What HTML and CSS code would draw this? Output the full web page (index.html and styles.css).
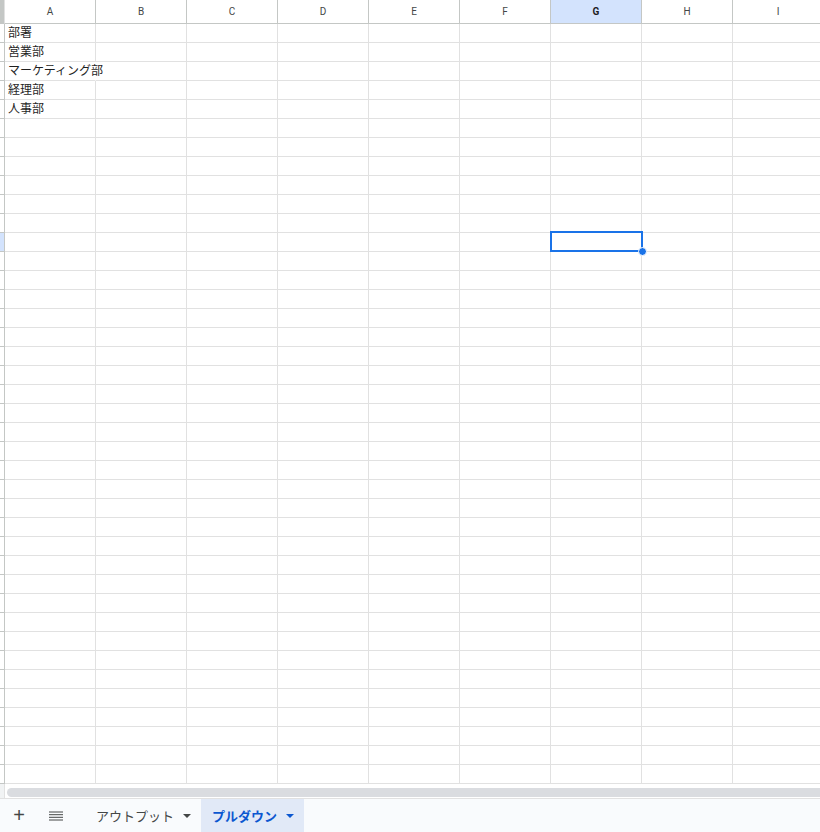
FILE: index.html
```html
<!DOCTYPE html>
<html lang="ja">
<head>
    <meta charset="UTF-8">
    <meta name="viewport" content="width=device-width, initial-scale=1.0">
    <title>プルダウン</title>
    <link rel="stylesheet" href="styles.css">
</head>
<body>
    <div class="sheet">
        <!-- Cell grid: header row + 40 data rows, built by the script below -->
        <div class="grid" id="grid">
            <div class="selection"></div>
        </div>

        <!-- Horizontal scrollbar -->
        <div class="hscroll">
            <div class="hscroll-corner"></div>
            <div class="hscroll-thumb"></div>
        </div>

        <!-- Sheet tabs -->
        <div class="tabbar">
            <button class="tool-btn add-btn">+</button>
            <button class="tool-btn list-btn">
                <svg width="14" height="10" viewBox="0 0 14 10">
                    <path d="M0 1h14M0 3.7h14M0 6.3h14M0 9h14" stroke="#444746" stroke-width="1"/>
                </svg>
            </button>
            <div class="tab">
                <span>アウトプット</span>
                <span class="caret"></span>
            </div>
            <div class="tab active">
                <span>プルダウン</span>
                <span class="caret"></span>
            </div>
        </div>
    </div>

    <script>
        const columns = ['A', 'B', 'C', 'D', 'E', 'F', 'G', 'H', 'I'];
        const values = ['部署', '営業部', 'マーケティング部', '経理部', '人事部'];
        const rowCount = 40;
        const activeCol = 6;   // G
        const activeRow = 12;

        const grid = document.getElementById('grid');

        // Column headers
        const head = document.createElement('div');
        head.className = 'row head-row';
        head.innerHTML = '<div class="row-head corner"></div>';
        columns.forEach((name, i) => {
            const cell = document.createElement('div');
            cell.className = 'col-head' + (i === activeCol ? ' current' : '');
            cell.textContent = name;
            head.appendChild(cell);
        });
        grid.appendChild(head);

        // Data rows
        for (let r = 1; r <= rowCount; r++) {
            const row = document.createElement('div');
            row.className = 'row';

            const rowHead = document.createElement('div');
            rowHead.className = 'row-head' + (r === activeRow ? ' current' : '');
            row.appendChild(rowHead);

            columns.forEach((name, i) => {
                const cell = document.createElement('div');
                cell.className = 'cell';
                if (i === 0 && values[r - 1]) {
                    cell.textContent = values[r - 1];
                    // long text runs over into column B
                    if (values[r - 1].length > 6) cell.classList.add('spill');
                }
                row.appendChild(cell);
            });
            grid.appendChild(row);
        }
    </script>
</body>
</html>
```

FILE: styles.css
```css
* {
    box-sizing: border-box;
}

body {
    margin: 0;
    font-family: 'Liberation Sans', 'Noto Sans CJK JP', Arial, sans-serif;
    background: #fff;
    color: #000;
}

.sheet {
    width: 820px;
    height: 832px;
    display: flex;
    flex-direction: column;
    overflow: hidden;
}

/* ---- grid ---- */
.grid {
    position: relative;
    height: 784px;
    overflow: hidden;
    flex: none;
}

.row {
    display: flex;
    height: 19px;
    width: max-content;
}

.head-row {
    height: 24px;
}

.row-head {
    width: 5px;
    flex: none;
    border-right: 1px solid #c4c7c5;
    border-bottom: 1px solid #c4c7c5;
    background: #fff;
}

.row-head.current {
    background: #d3e3fd;
}

.row-head.corner {
    background: #c4c7c5;
    border-right-color: #e1e1e1;
}

.col-head {
    width: 91px;
    flex: none;
    border-right: 1px solid #c4c7c5;
    border-bottom: 1px solid #c4c7c5;
    font-family: Roboto, 'Liberation Sans', sans-serif;
    font-size: 10px;
    color: #444746;
    text-align: center;
    line-height: 23px;
}

.col-head.current {
    background: #d3e3fd;
    color: #1f1f1f;
    font-weight: bold;
}

.cell {
    width: 91px;
    flex: none;
    border-right: 1px solid #e1e1e1;
    border-bottom: 1px solid #e1e1e1;
    font-size: 12px;
    line-height: 19px;
    padding: 0 3px;
    white-space: nowrap;
    color: #1f1f1f;
}

.cell.spill {
    overflow: visible;
    border-right-color: transparent;
    position: relative;
    z-index: 1;
}

/* active cell outline and fill handle */
.selection {
    position: absolute;
    left: 550px;
    top: 231px;
    width: 93px;
    height: 21px;
    border: 2px solid #1a73e8;
    z-index: 2;
}

.selection::after {
    content: '';
    position: absolute;
    right: -6px;
    bottom: -6px;
    width: 7px;
    height: 7px;
    border-radius: 50%;
    background: #1a73e8;
    border: 1px solid #fff;
}

/* ---- scrollbar ---- */
.hscroll {
    height: 15px;
    flex: none;
    display: flex;
    border-bottom: 1px solid #e1e1e1;
    background: #fff;
}

.hscroll-corner {
    width: 5px;
    background: #f1f3f4;
    border-right: 1px solid #e1e1e1;
}

.hscroll-thumb {
    flex: 1;
    margin: 4px 0 1px 2px;
    background: #dadce0;
    border-radius: 5px 0 0 5px;
}

/* ---- tabs ---- */
.tabbar {
    flex: 1;
    display: flex;
    align-items: stretch;
    background: #f9fbfd;
    font-size: 13px;
    color: #444746;
}

.tool-btn {
    border: none;
    background: none;
    padding: 0;
    display: flex;
    align-items: center;
    justify-content: center;
    color: #444746;
    font-family: inherit;
}

.add-btn {
    width: 38px;
    font-size: 20px;
    font-weight: 300;
}

.list-btn {
    width: 36px;
}

.tab {
    display: flex;
    align-items: center;
    gap: 9px;
    padding: 0 10px 0 12px;
    margin-left: 10px;
}

.tab.active {
    margin-left: 0;
    padding-left: 11px;
    background: #e1e9f7;
    color: #0b57d0;
    font-weight: bold;
}

.caret {
    width: 0;
    height: 0;
    border-left: 4px solid transparent;
    border-right: 4px solid transparent;
    border-top: 4px solid currentColor;
}
```
